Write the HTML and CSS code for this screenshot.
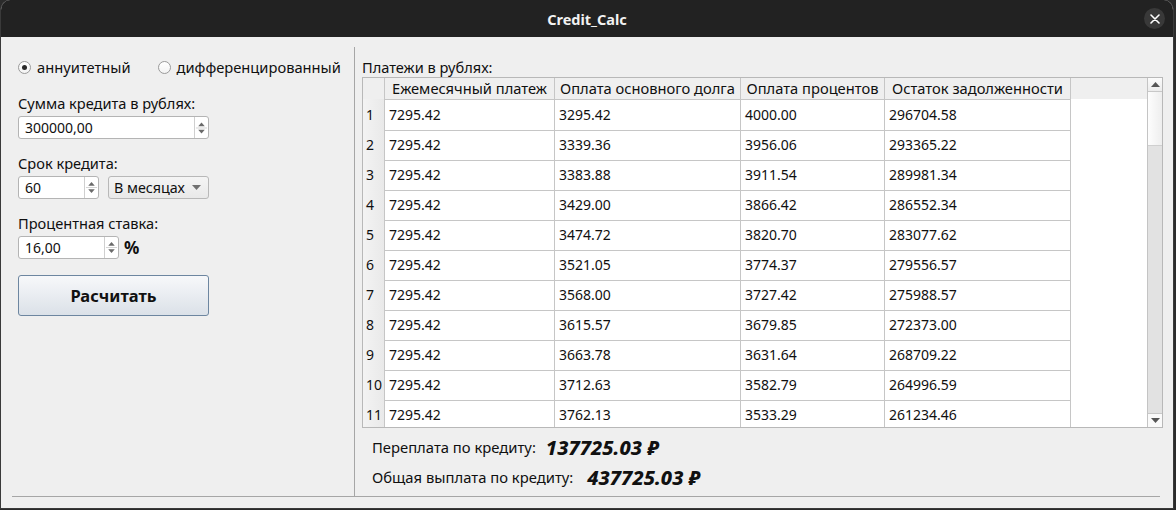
FILE: index.html
```html
<!DOCTYPE html>
<html lang="ru">
<head>
<meta charset="utf-8">
<title>Credit_Calc</title>
<link rel="stylesheet" href="styles.css">
</head>
<body>
<div class="window">
  <div class="titlebar">
    <span class="title">Credit_Calc</span>
    <span class="close">
      <svg width="10" height="10" viewBox="0 0 10 10"><path d="M1 1L9 9M9 1L1 9" stroke="#fff" stroke-width="1.6" stroke-linecap="round"/></svg>
    </span>
  </div>
  <div class="content">
    <div class="main">
      <div class="left">
        <div class="radios">
          <label class="radio"><span class="dot checked"></span>аннуитетный</label>
          <label class="radio"><span class="dot"></span>дифференцированный</label>
        </div>
        <div class="label l1">Сумма кредита в рублях:</div>
        <div class="spin w190"><span class="val">300000,00</span><span class="arrows"><svg width="14" height="20" viewBox="0 0 14 20"><path d="M3.5 8L7 4L10.5 8Z" fill="#6a6a6a"/><path d="M3.5 12L7 16L10.5 12Z" fill="#6a6a6a"/><path d="M1 10H13" stroke="#d0d0d0"/></svg></span></div>
        <div class="label l2">Срок кредита:</div>
        <div class="row">
          <div class="spin w80"><span class="val">60</span><span class="arrows"><svg width="14" height="21" viewBox="0 0 14 21"><path d="M3.5 8.5L7 4.5L10.5 8.5Z" fill="#6a6a6a"/><path d="M3.5 12.5L7 16.5L10.5 12.5Z" fill="#6a6a6a"/><path d="M1 10.5H13" stroke="#d0d0d0"/></svg></span></div>
          <div class="combo"><span>В месяцах</span><svg width="9" height="5" viewBox="0 0 9 5"><path d="M0 0H9L4.5 5Z" fill="#707070"/></svg></div>
        </div>
        <div class="label l3">Процентная ставка:</div>
        <div class="row">
          <div class="spin w100"><span class="val">16,00</span><span class="arrows"><svg width="14" height="21" viewBox="0 0 14 21"><path d="M3.5 8.5L7 4.5L10.5 8.5Z" fill="#6a6a6a"/><path d="M3.5 12.5L7 16.5L10.5 12.5Z" fill="#6a6a6a"/><path d="M1 10.5H13" stroke="#d0d0d0"/></svg></span></div>
          <span class="pct">%</span>
        </div>
        <button class="btn">Расчитать</button>
      </div>
      <div class="right">
        <div class="label caption">Платежи в рублях:</div>
        <div class="frame">
          <div class="grid">
            <div class="tr head">
              <div class="th corner"></div>
              <div class="th">Ежемесячный платеж</div>
              <div class="th">Оплата основного долга</div>
              <div class="th">Оплата процентов</div>
              <div class="th">Остаток задолженности</div>
            </div>
            <div class="tr"><div class="rh">1</div><div class="td">7295.42</div><div class="td">3295.42</div><div class="td">4000.00</div><div class="td">296704.58</div></div>
            <div class="tr"><div class="rh">2</div><div class="td">7295.42</div><div class="td">3339.36</div><div class="td">3956.06</div><div class="td">293365.22</div></div>
            <div class="tr"><div class="rh">3</div><div class="td">7295.42</div><div class="td">3383.88</div><div class="td">3911.54</div><div class="td">289981.34</div></div>
            <div class="tr"><div class="rh">4</div><div class="td">7295.42</div><div class="td">3429.00</div><div class="td">3866.42</div><div class="td">286552.34</div></div>
            <div class="tr"><div class="rh">5</div><div class="td">7295.42</div><div class="td">3474.72</div><div class="td">3820.70</div><div class="td">283077.62</div></div>
            <div class="tr"><div class="rh">6</div><div class="td">7295.42</div><div class="td">3521.05</div><div class="td">3774.37</div><div class="td">279556.57</div></div>
            <div class="tr"><div class="rh">7</div><div class="td">7295.42</div><div class="td">3568.00</div><div class="td">3727.42</div><div class="td">275988.57</div></div>
            <div class="tr"><div class="rh">8</div><div class="td">7295.42</div><div class="td">3615.57</div><div class="td">3679.85</div><div class="td">272373.00</div></div>
            <div class="tr"><div class="rh">9</div><div class="td">7295.42</div><div class="td">3663.78</div><div class="td">3631.64</div><div class="td">268709.22</div></div>
            <div class="tr"><div class="rh">10</div><div class="td">7295.42</div><div class="td">3712.63</div><div class="td">3582.79</div><div class="td">264996.59</div></div>
            <div class="tr"><div class="rh">11</div><div class="td">7295.42</div><div class="td">3762.13</div><div class="td">3533.29</div><div class="td">261234.46</div></div>
          </div>
          <div class="scrollbar">
            <div class="sbtn"><svg width="9" height="5" viewBox="0 0 9 5"><path d="M4.5 0L9 5H0Z" fill="#555"/></svg></div>
            <div class="thumb"></div>
            <div class="track"></div>
            <div class="sbtn"><svg width="9" height="5" viewBox="0 0 9 5"><path d="M0 0H9L4.5 5Z" fill="#555"/></svg></div>
          </div>
        </div>
        <div class="summary">
          <div class="sline s1"><span>Переплата по кредиту:</span><b class="money">137725.03 ₽</b></div>
          <div class="sline s2"><span>Общая выплата по кредиту:</span><b class="money">437725.03 ₽</b></div>
        </div>
      </div>
    </div>
    <div class="hline"></div>
  </div>
</div>
</body>
</html>
```

FILE: styles.css
```css
* { box-sizing: border-box; }
html, body { margin: 0; padding: 0; }
body {
  width: 1176px;
  height: 510px;
  background: #2b2b2b;
  font-family: "Noto Sans", "DejaVu Sans", sans-serif;
  font-size: 14px;
  color: #101010;
  overflow: hidden;
}
.window {
  width: 1174px;
  height: 509px;
  background: #efefef;
  border: 1px solid #3a3a3a;
  border-top: none;
  border-radius: 10px 10px 0 0;
  overflow: hidden;
  display: flex;
  flex-direction: column;
}
.titlebar {
  height: 37px;
  background: #222222;
  display: flex;
  align-items: center;
  justify-content: center;
  position: relative;
  flex: none;
}
.title {
  color: #f2f2f2;
  font-weight: bold;
  font-size: 14.5px;
}
.close {
  position: absolute;
  right: 8px;
  top: 8px;
  width: 21px;
  height: 21px;
  border-radius: 50%;
  background: #393939;
  display: flex;
  align-items: center;
  justify-content: center;
}
.content {
  flex: 1;
  display: flex;
  flex-direction: column;
  padding-top: 10px;
}
.main {
  display: flex;
  height: 449px;
}
.left {
  width: 354px;
  border-right: 1px solid #a6a6a6;
  padding: 10px 0 0 16px;
  display: flex;
  flex-direction: column;
  align-items: flex-start;
}
.radios {
  display: flex;
  gap: 27px;
  height: 20px;
  align-items: center;
  margin-left: 1px;
  font-size: 14.7px;
}
.radio {
  display: flex;
  align-items: center;
  gap: 6px;
  line-height: 20px;
}
.dot {
  width: 13px;
  height: 13px;
  border-radius: 50%;
  border: 1px solid #9a9a9a;
  background: linear-gradient(#ffffff, #f3f3f3);
  display: inline-flex;
  align-items: center;
  justify-content: center;
}
.dot.checked::after {
  content: "";
  width: 5px;
  height: 5px;
  border-radius: 50%;
  background: #2a2a2a;
}
.label {
  line-height: 20px;
  margin-left: 1px;
  font-size: 14.6px;
}
.l1 { margin-top: 16px; }
.l2 { margin-top: 14px; }
.l3 { margin-top: 14px; }
.spin {
  height: 23px;
  margin-top: 3px;
  margin-left: 1px;
  background: #ffffff;
  border: 1px solid #b4b4b4;
  border-radius: 3px;
  display: flex;
  align-items: stretch;
}
.w190 { width: 191px; }
.w80 { width: 81px; }
.w100 { width: 101px; }
.val {
  flex: 1;
  padding-left: 6px;
  line-height: 21px;
}
.arrows {
  width: 14px;
  border-left: 1px solid #cfcfcf;
  display: flex;
  align-items: center;
  justify-content: center;
}
.row {
  display: flex;
  align-items: center;
  gap: 9px;
}
.combo {
  width: 101px;
  height: 23px;
  margin-top: 3px;
  border: 1px solid #b8b8b8;
  border-radius: 3px;
  background: linear-gradient(#f4f4f4, #e9e9e9);
  display: flex;
  align-items: center;
  justify-content: space-between;
  padding: 0 7px 0 5px;
  font-size: 14.3px;
}
.pct {
  font-weight: bold;
  font-size: 17px;
  margin-left: -4px;
  margin-top: 2px;
}
.btn {
  margin-top: 16px;
  margin-left: 1px;
  width: 191px;
  height: 41px;
  border: 1px solid #6d86a0;
  border-radius: 3px;
  background: linear-gradient(#f7f8fa, #dbe1e8);
  font-family: inherit;
  font-size: 16.5px;
  font-weight: bold;
  color: #111;
}
.right {
  flex: 1;
  padding: 10px 0 0 7px;
  display: flex;
  flex-direction: column;
}
.caption { margin-left: 0; }
.frame {
  margin-top: 0;
  width: 801px;
  height: 351px;
  border: 1px solid #b8b8b8;
  background: #ffffff;
  display: flex;
  overflow: hidden;
}
.grid {
  flex: 1;
  display: flex;
  flex-direction: column;
  overflow: hidden;
}
.tr {
  display: grid;
  grid-template-columns: 22px 170px 186px 144px 186px;
  height: 30px;
  flex: none;
}
.tr.head {
  height: 21px;
  background: #efefef;
}
.th {
  border-right: 1px solid #c6c6c6;
  border-bottom: 1px solid #c6c6c6;
  text-align: center;
  line-height: 21px;
  white-space: nowrap;
  font-size: 14.7px;
}
.th.corner { background: #efefef; }
.rh {
  background: linear-gradient(90deg, #f3f3f3, #e9e9e9);
  border-right: 1px solid #c6c6c6;
  border-bottom: 1px solid #c6c6c6;
  padding: 1px 0 0 3px;
  line-height: 30px;
}
.td {
  border-right: 1px solid #c6c6c6;
  border-bottom: 1px solid #c6c6c6;
  padding: 1px 0 0 4px;
  line-height: 30px;
  white-space: nowrap;
}
.scrollbar {
  width: 15px;
  border-left: 1px solid #c4c4c4;
  display: flex;
  flex-direction: column;
  background: #e2e2e2;
  flex: none;
}
.sbtn {
  height: 14px;
  flex: none;
  background: linear-gradient(#fbfbfb, #ececec);
  display: flex;
  align-items: center;
  justify-content: center;
}
.sbtn:first-child { border-bottom: 1px solid #c8c8c8; }
.sbtn:last-child { border-top: 1px solid #c8c8c8; background: #fafafa; }
.thumb {
  height: 54px;
  flex: none;
  background: linear-gradient(90deg, #fdfdfd, #eeeeee);
  border-bottom: 1px solid #cfcfcf;
}
.track { flex: 1; }
.summary {
  padding-left: 10px;
  margin-top: 9px;
  display: flex;
  flex-direction: column;
  gap: 10px;
  font-size: 14.8px;
}
.sline {
  display: flex;
  align-items: center;
  height: 20px;
}
.s1 { gap: 10px; }
.s2 { gap: 14px; }
.money {
  font-size: 20px;
  font-style: italic;
  font-weight: 800;
  color: #111;
}
.hline {
  margin: 0 13px 0 11px;
  height: 1px;
  background: #a6a6a6;
}
```
